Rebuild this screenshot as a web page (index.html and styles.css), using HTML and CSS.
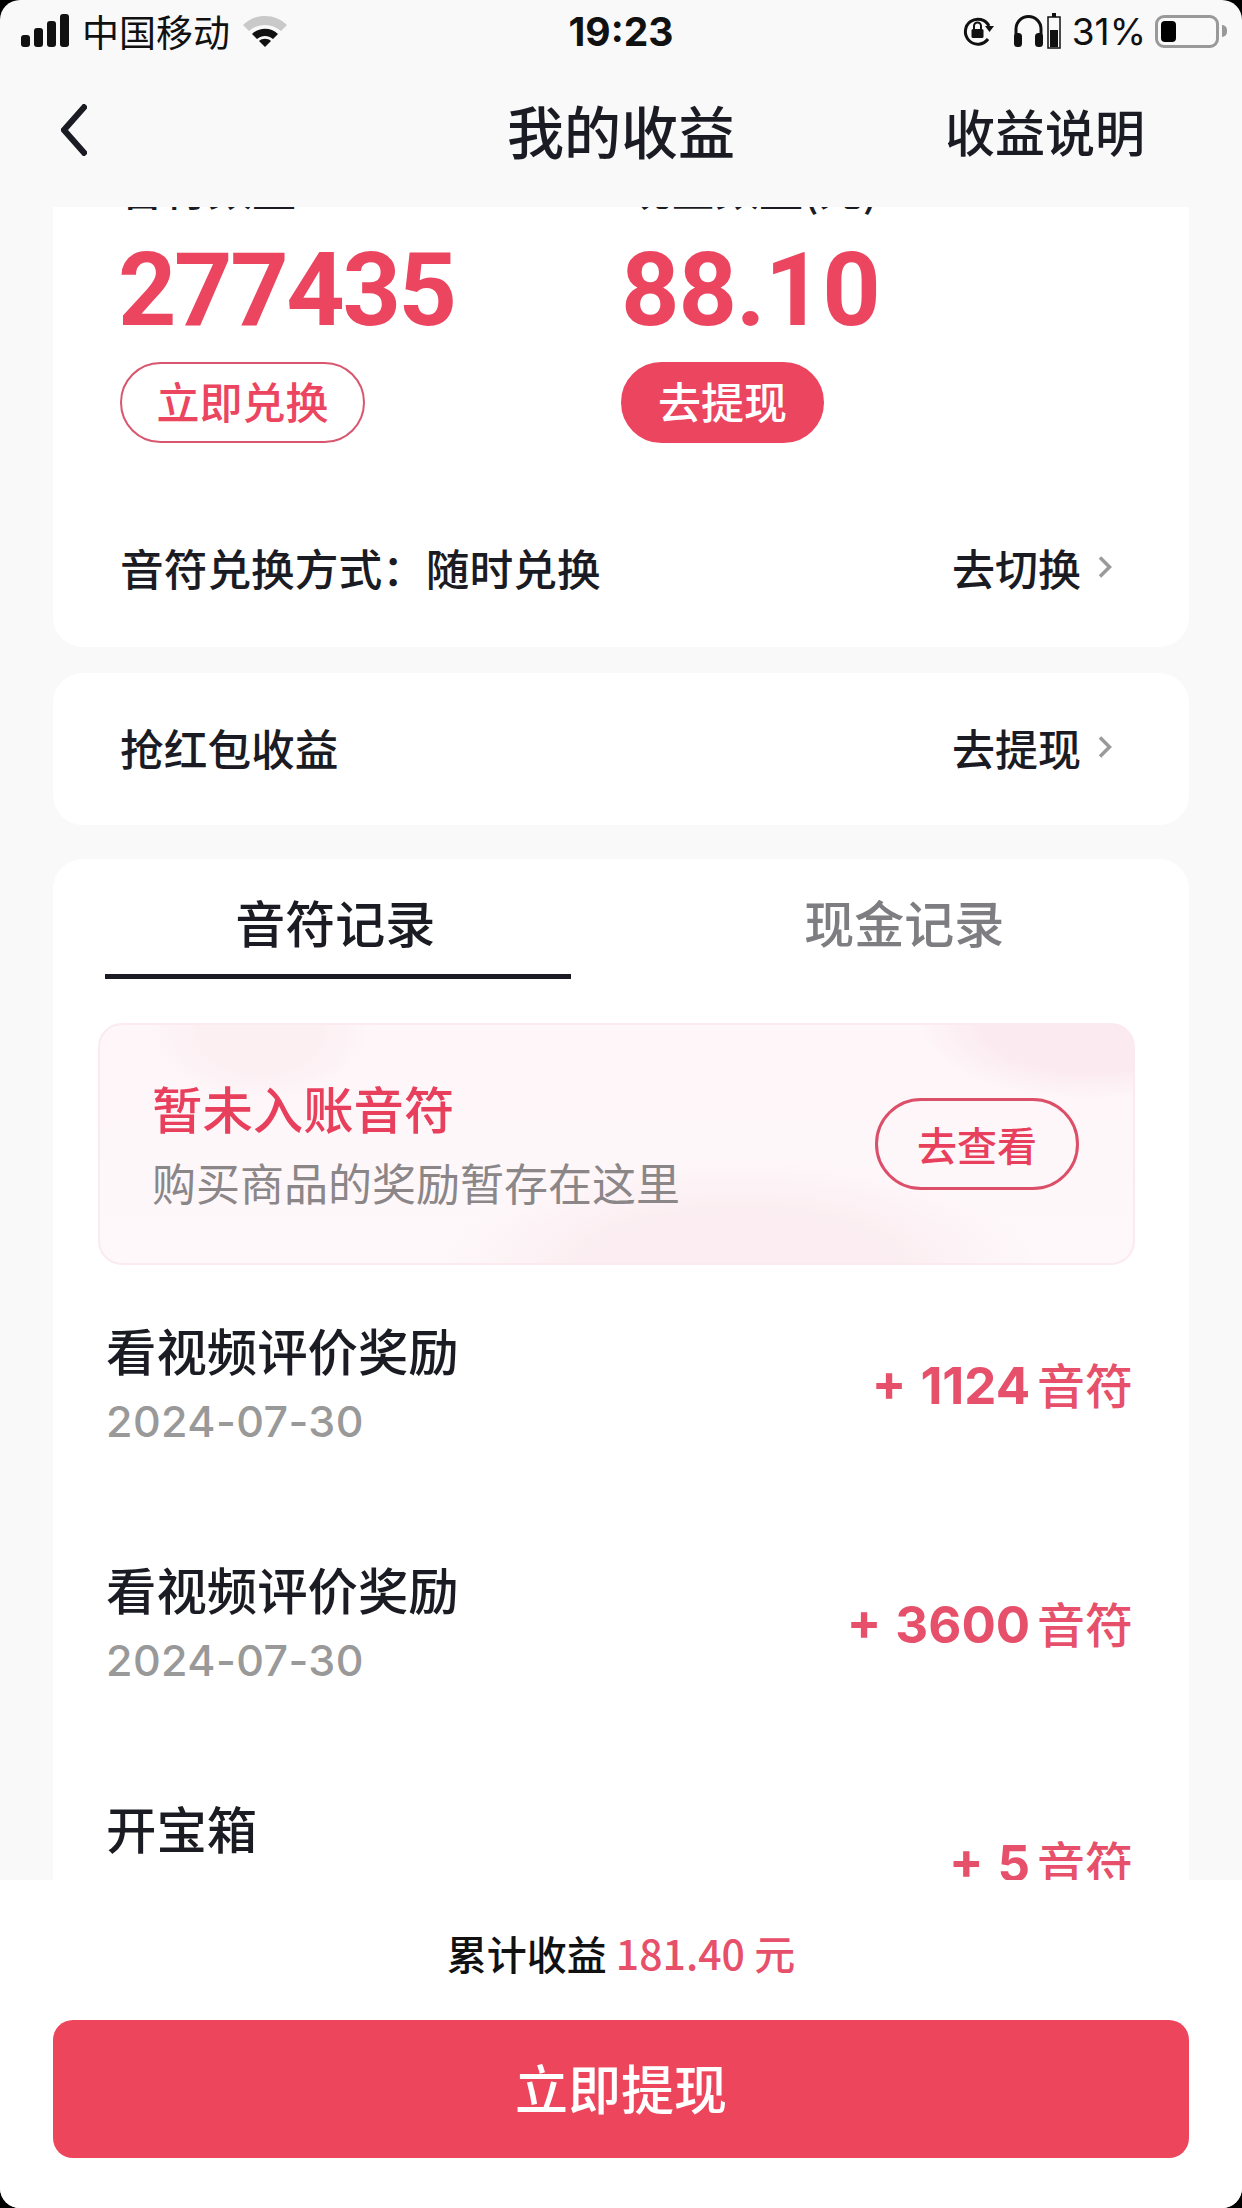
FILE: index.html
```html
<!DOCTYPE html>
<html lang="zh-CN">
<head>
    <meta charset="UTF-8">
    <meta name="viewport" content="width=device-width, initial-scale=1.0">
    <title>我的收益</title>
    <link rel="stylesheet" href="styles.css">
</head>
<body>
    <div class="page">
        <header class="header">
            <div class="status-bar">
                <div class="status-left">
                    <svg class="signal" width="50" height="34" viewBox="0 0 50 34">
                        <rect x="0" y="21" width="9" height="12" rx="3" fill="#111"/>
                        <rect x="13" y="14" width="9" height="19" rx="3" fill="#111"/>
                        <rect x="26" y="7" width="9" height="26" rx="3" fill="#111"/>
                        <rect x="39" y="0" width="9" height="33" rx="3" fill="#111"/>
                    </svg>
                    <span class="carrier">中国移动</span>
                    <svg class="wifi" width="46" height="34" viewBox="0 0 46 34">
                        <path d="M1 11 C13 -1 33 -1 45 11 L39 17 C30 9 16 9 7 17 Z" fill="#c9c9c9"/>
                        <path d="M10 20 C17 13 29 13 36 20 L31 25 C26 21 20 21 15 25 Z" fill="#111"/>
                        <path d="M17 27 C20 24 26 24 29 27 L23 33 Z" fill="#111"/>
                    </svg>
                </div>
                <div class="status-time">19:23</div>
                <div class="status-right">
                    <svg width="34" height="34" viewBox="0 0 32 34">
                        <path d="M26 25 A12.5 12.5 0 1 1 27 12" fill="none" stroke="#111" stroke-width="3"/>
                        <path d="M23 12 L32 12 L27.5 18 Z" fill="#111"/>
                        <rect x="9.5" y="15" width="12" height="9" rx="1.5" fill="#111"/>
                        <path d="M12 15 V12 A3.5 3.5 0 0 1 19 12 V15" fill="none" stroke="#111" stroke-width="2"/>
                    </svg>
                    <svg class="icon-phones" width="31" height="34" viewBox="0 0 31 34">
                        <path d="M3 24 V15 A12.5 12.5 0 0 1 28 15 V24" fill="none" stroke="#111" stroke-width="3"/>
                        <rect x="1" y="19" width="8" height="14" rx="3.5" fill="#111"/>
                        <rect x="22" y="19" width="8" height="14" rx="3.5" fill="#111"/>
                    </svg>
                    <svg class="icon-case" width="14" height="36" viewBox="0 0 14 36">
                        <rect x="5" y="0" width="4" height="4" fill="#111"/>
                        <rect x="1" y="4" width="12" height="31" fill="none" stroke="#111" stroke-width="1.5"/>
                        <rect x="3" y="17" width="8" height="17" fill="#111"/>
                    </svg>
                    <span class="battery-text">31%</span>
                    <div class="battery"><div class="battery-fill"></div></div>
                    <div class="battery-nub"></div>
                </div>
            </div>
            <nav class="nav">
                <div>
                    <svg class="back" width="26" height="52" viewBox="0 0 26 52">
                        <path d="M25 1 L3 26 L25 51" fill="none" stroke="#1b1b23" stroke-width="6"/>
                    </svg>
                </div>
                <h1 class="nav-title">我的收益</h1>
                <div class="nav-link">收益说明</div>
            </nav>
        </header>

        <main class="scroll">
            <div class="scroll-inner">
                <section class="card card-stats">
                    <div class="stats">
                        <div class="stat">
                            <div class="stat-label">音符数量</div>
                            <div class="stat-value">277435</div>
                            <div class="pill pill-outline">立即兑换</div>
                        </div>
                        <div class="stat">
                            <div class="stat-label stat-label-cash">现金数量(元)</div>
                            <div class="stat-value stat-value-cash">88.10</div>
                            <div class="pill pill-solid">去提现</div>
                        </div>
                    </div>
                    <div class="link-row link-row-mode">
                        <span class="link-name">音符兑换方式：随时兑换</span>
                        <span class="link-action">去切换
                            <svg width="14" height="22" viewBox="0 0 14 22"><path d="M2 1.5 L11.5 11 L2 20.5" fill="none" stroke="#9a9a9a" stroke-width="3.5"/></svg>
                        </span>
                    </div>
                </section>

                <section class="card card-red">
                    <div class="link-row">
                        <span class="link-name">抢红包收益</span>
                        <span class="link-action">去提现
                            <svg width="14" height="22" viewBox="0 0 14 22"><path d="M2 1.5 L11.5 11 L2 20.5" fill="none" stroke="#9a9a9a" stroke-width="3.5"/></svg>
                        </span>
                    </div>
                </section>

                <section class="card card-records">
                    <div class="tabs">
                        <div class="tab tab-active">音符记录</div>
                        <div class="tab">现金记录</div>
                    </div>

                    <div class="promo">
                        <div class="promo-text">
                            <div class="promo-title">暂未入账音符</div>
                            <div class="promo-sub">购买商品的奖励暂存在这里</div>
                        </div>
                        <div class="promo-btn">去查看</div>
                    </div>

                    <div class="records">
                        <div class="record">
                            <div>
                                <div class="record-title">看视频评价奖励</div>
                                <div class="record-date">2024-07-30</div>
                            </div>
                            <div class="record-amount"><b>+ 1124</b> 音符</div>
                        </div>
                        <div class="record">
                            <div>
                                <div class="record-title">看视频评价奖励</div>
                                <div class="record-date">2024-07-30</div>
                            </div>
                            <div class="record-amount"><b>+ 3600</b> 音符</div>
                        </div>
                        <div class="record">
                            <div>
                                <div class="record-title">开宝箱</div>
                                <div class="record-date">2024-07-30</div>
                            </div>
                            <div class="record-amount"><b>+ 5</b> 音符</div>
                        </div>
                    </div>
                </section>
            </div>
        </main>

        <footer class="footer">
            <div class="total">累计收益 <span class="total-num">181.40 元</span></div>
            <div class="withdraw">立即提现</div>
        </footer>
    </div>
</body>
</html>
```

FILE: styles.css
```css
html {
    background-color: #000;
}
body {
    margin: 0;
    font-family: "Noto Sans CJK SC", sans-serif;
    color: #1b1b23;
}
.page {
    width: 1242px;
    height: 2208px;
    display: flex;
    flex-direction: column;
    overflow: hidden;
    border-radius: 20px;
    background-color: #f9f9fa;
}

/* top bars */
.header {
    height: 207px;
    flex-shrink: 0;
}
.status-bar {
    height: 62px;
    display: grid;
    grid-template-columns: 1fr auto 1fr;
    align-items: center;
    padding: 0 18px;
    color: #111;
}
.status-left,
.status-right {
    display: flex;
    align-items: center;
}
.status-left {
    margin-left: 3px;
}
.status-right {
    justify-content: flex-end;
    margin-right: -3px;
}
.carrier {
    font-size: 37px;
    margin-left: 11px;
    line-height: 1;
}
.wifi {
    width: 48px;
    margin-left: 11px;
}
.status-time {
    font-family: Inter, sans-serif;
    font-weight: 700;
    font-size: 39px;
}
.icon-phones {
    margin-left: 18px;
}
.icon-case {
    margin-left: 3px;
}
.battery-text {
    font-family: Inter, sans-serif;
    font-size: 37px;
    margin-left: 11px;
}
.battery {
    width: 64px;
    height: 33px;
    box-sizing: border-box;
    border: 3px solid #999;
    border-radius: 9px;
    padding: 3px;
    margin-left: 9px;
}
.battery-fill {
    width: 15px;
    height: 100%;
    background-color: #000;
    border-radius: 4px;
}
.battery-nub {
    width: 5px;
    height: 12px;
    margin-left: 3px;
    background-color: #999;
    border-radius: 0 5px 5px 0;
}
.nav {
    display: grid;
    grid-template-columns: 1fr auto 1fr;
    align-items: center;
    height: 145px;
    padding: 0 97px 10px;
    box-sizing: border-box;
}
.back {
    display: block;
    margin-left: -36px;
}
.nav-title {
    margin: 0;
    font-size: 57px;
    font-weight: 500;
    line-height: 1;
}
.nav-link {
    font-size: 50px;
    font-weight: 500;
    text-align: right;
}

/* scrolled content */
.scroll {
    flex: 1;
    min-height: 0;
    overflow: hidden;
    padding: 0 53px;
}
.scroll-inner {
    margin-top: -70px;
}
.card {
    background-color: #fff;
    border-radius: 30px;
}
.card-stats {
    padding: 20px 67px 28px;
}
.stats {
    display: flex;
}
.stat {
    width: 502px;
}
.stat-label {
    font-size: 44px;
    font-weight: 500;
    line-height: 60px;
}
.stat-label-cash {
    margin-left: 6px;
}
.stat-value {
    margin: 23px 0 0 -2px;
    font-family: Roboto, sans-serif;
    font-weight: 700;
    font-size: 102px;
    letter-spacing: -2.4px;
    line-height: 100px;
    color: #ec4560;
}
.stat-value-cash {
    margin-left: 0;
    letter-spacing: -1px;
}
.pill {
    margin-top: 22px;
    height: 81px;
    line-height: 73px;
    box-sizing: border-box;
    border-radius: 41px;
    border: 2px solid #d9566f;
    font-size: 43px;
    font-weight: 500;
    text-align: center;
}
.pill-outline {
    width: 245px;
    color: #ec4560;
}
.pill-solid {
    width: 203px;
    background-color: #ec4560;
    border-color: #ec4560;
    color: #fff;
}
.link-row {
    display: flex;
    align-items: center;
    justify-content: space-between;
    font-size: 43px;
    font-weight: 500;
    padding-bottom: 5px;
    box-sizing: border-box;
}
.link-name {
    font-size: 43.7px;
}
.link-row-mode {
    height: 100px;
    margin-top: 76px;
}
.link-action {
    display: flex;
    align-items: center;
    gap: 17px;
    margin-right: 10px;
}
.card-red {
    margin-top: 26px;
    padding: 0 67px;
}
.card-red .link-row {
    height: 152px;
}
.card-records {
    margin-top: 34px;
    padding: 16px 52px 0;
}

/* tabs */
.tabs {
    display: flex;
    gap: 101px;
}
.tab {
    width: 466px;
    height: 104px;
    line-height: 92px;
    box-sizing: border-box;
    font-size: 50px;
    font-weight: 500;
    text-align: center;
    color: #7d7d82;
}
.tab-active {
    padding-right: 5px;
    color: #1b1b23;
    border-bottom: 5px solid #1b1b23;
}

/* pending banner */
.promo {
    margin: 44px 2px 0 -7px;
    height: 242px;
    box-sizing: border-box;
    display: flex;
    align-items: center;
    justify-content: space-between;
    padding: 0 54px 0 52px;
    border: 2px solid #fbeaee;
    border-radius: 24px;
    background-color: #fef8fa;
    background-image:
        radial-gradient(ellipse 110px 70px at 160px 8px, #fcf0f3 55%, transparent 100%),
        radial-gradient(ellipse 170px 75px at 990px 0, #fbeaef 60%, transparent 100%),
        radial-gradient(ellipse 300px 120px at 640px 250px, #fbedf1 50%, transparent 100%),
        linear-gradient(180deg, #fef6f9, #fef8fa);
}
.promo-text {
    margin-top: 2px;
}
.promo-title {
    font-size: 50.4px;
    font-weight: 500;
    line-height: 70px;
    color: #e8405c;
}
.promo-sub {
    margin-top: 4px;
    font-size: 44px;
    line-height: 70px;
    color: #8b8688;
}
.promo-btn {
    width: 204px;
    height: 92px;
    line-height: 86px;
    box-sizing: border-box;
    border: 3px solid #dc4f69;
    border-radius: 46px;
    font-size: 40px;
    font-weight: 500;
    text-align: center;
    color: #e8405c;
}

/* record list */
.records {
    margin: 0 4px 0 1px;
}
.record {
    display: flex;
    align-items: center;
    justify-content: space-between;
    padding: 58px 0 53px;
}
.record-title {
    margin-top: -3px;
    font-size: 50.4px;
    font-weight: 500;
    line-height: 60px;
}
.record-date {
    margin-top: 11px;
    font-family: Inter, sans-serif;
    font-weight: 500;
    font-size: 43px;
    letter-spacing: 0.4px;
    line-height: 60px;
    color: #999;
}
.record-amount {
    padding-bottom: 8px;
    font-size: 48px;
    font-weight: 500;
    word-spacing: -4px;
    color: #e6506a;
}
.record-amount b {
    font-family: Inter, sans-serif;
    font-weight: 700;
    font-size: 51px;
    word-spacing: 2px;
}

/* bottom bar */
.footer {
    height: 328px;
    flex-shrink: 0;
    box-sizing: border-box;
    padding: 42px 53px 0;
    background-color: #fff;
}
.total {
    height: 60px;
    line-height: 60px;
    margin-bottom: 38px;
    font-size: 40px;
    font-weight: 500;
    text-align: center;
    color: #111;
}
.total-num {
    font-size: 41px;
    color: #e6506a;
}
.withdraw {
    height: 138px;
    line-height: 134px;
    border-radius: 20px;
    background-color: #ec455c;
    font-size: 53px;
    font-weight: 500;
    text-align: center;
    color: #fff;
}
```
